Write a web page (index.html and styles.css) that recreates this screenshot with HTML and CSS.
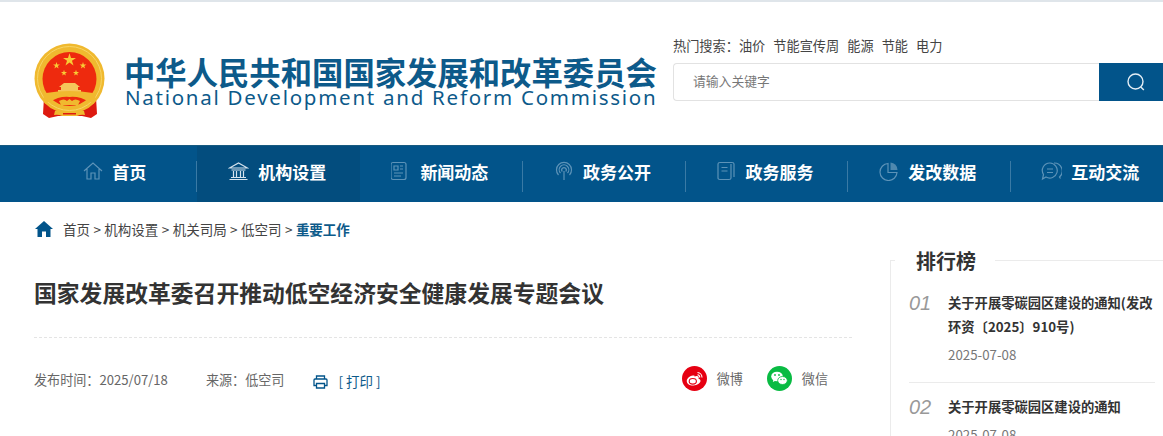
FILE: index.html
```html
<!DOCTYPE html>
<html lang="zh-CN">
<head>
<meta charset="utf-8">
<title>国家发展改革委召开推动低空经济安全健康发展专题会议</title>
<link rel="stylesheet" href="styles.css">
</head>
<body>
<header class="header">
  <div class="brand">
    <svg class="emblem" width="72" height="76" viewBox="0 0 72 76">
      <defs><path id="star" d="M0-1 .225-.309H.951L.363.118.588.809 0 .382-.588.809-.363.118-.951-.309H-.225Z"/></defs>
      <path d="M10 54 L9 71 L15 75 L24 73 L48 73 L57 75 L63 71 L62 54 Z" fill="#dd1a10"/>
      <circle cx="35.500" cy="35.500" r="35" fill="#f0b92f"/>
      <circle cx="35.500" cy="35.500" r="32" fill="none" stroke="#f7d566" stroke-width="1"/>
      <circle cx="35.500" cy="36" r="27" fill="#ee2a0e"/>
      <g fill="#f8cb35">
        <use href="#star" transform="translate(35.500 17) scale(6.800)"/>
        <use href="#star" transform="translate(22.500 22.500) scale(3.600)"/>
        <use href="#star" transform="translate(49 22.500) scale(3.600)"/>
        <use href="#star" transform="translate(30 30) scale(3.200)"/>
        <use href="#star" transform="translate(42 30) scale(3.200)"/>
      </g>
      <path d="M30 40 H41 L46 44 H44 V47 H47 V50 H24 V47 H27 V44 H25 Z" fill="#f5c65a"/>
      <path d="M12 50 Q35.500 46 59 50 L62 56 Q60 60 55 59 Q46 53 35.500 54 Q25 53 16 59 Q11 60 9 56 Z" fill="#f0b92f"/>
      <path d="M25 58 Q30 55 33 58 L35.500 56 L38 58 Q41 55 46 58 L44 62 H27 Z" fill="#f0b92f"/>
      <path d="M21 68 Q26 66 30 69 H41 Q45 66 50 68 L51 72 Q47 71 43 73 H28 Q24 71 20 72 Z" fill="#f0b92f"/>
      <rect x="29" y="70" width="13" height="1.500" fill="#dd1a10"/>
    </svg>
    <div class="brand-text">
      <div class="brand-cn">中华人民共和国国家发展和改革委员会</div>
      <div class="brand-en">National Development and Reform Commission</div>
    </div>
  </div>
  <div class="search">
    <div class="hot"><span>热门搜索：</span><a>油价</a><a>节能宣传周</a><a>能源</a><a>节能</a><a>电力</a></div>
    <div class="search-row">
      <div class="search-input">请输入关键字</div>
      <button class="search-btn" aria-label="搜索">
        <svg width="20" height="20" viewBox="0 0 20 20" fill="none" stroke="#e4eef5" stroke-width="1.400"><circle cx="9.500" cy="9.500" r="7.500"/><path d="M14.800 15l3 3"/></svg>
      </button>
    </div>
  </div>
</header>

<nav class="nav">
  <a class="nav-item">
    <svg class="nav-icon" width="20" height="20" viewBox="0 0 20 20"><path d="M1 10 L10 2 L19 10 M4 8 V18 H8 V12 H12 V18 H16 V8"/></svg>
    <span>首页</span>
  </a>
  <a class="nav-item active">
    <svg class="nav-icon bright" width="21" height="20" viewBox="0 0 20 20"><path d="M1 7 L10 2 L19 7 Z M3 9 H17 M5 10 V16 M8 10 V16 M12 10 V16 M15 10 V16 M2.500 16.500 H17.500 M1 18.500 H19"/></svg>
    <span>机构设置</span>
  </a>
  <a class="nav-item">
    <svg class="nav-icon" width="20" height="20" viewBox="0 0 20 20"><rect x="0" y="1.500" width="15" height="17" rx="2"/><path d="M3 5 H7 V9 H3 Z M9 5 H12 M9 8 H12 M3 12 H12 M3 15 H10"/></svg>
    <span>新闻动态</span>
  </a>
  <a class="nav-item">
    <svg class="nav-icon" width="20" height="20" viewBox="0 0 20 20"><path d="M10 19 V10 M4.500 14 A7.500 7.500 0 1 1 15.500 14 M6.500 12 A4.800 4.800 0 1 1 13.500 12 M8.300 10.500 A2.300 2.300 0 1 1 11.700 10.500"/></svg>
    <span>政务公开</span>
  </a>
  <a class="nav-item">
    <svg class="nav-icon" width="20" height="20" viewBox="0 0 20 20"><path d="M14 3 V17 Q14 18.500 12 18.500 H3 Q1 18.500 1 17 V3 Q1 1.500 3 1.500 H15 Q17 1.500 17 3 V16 M4.500 6.500 H10.500 M4.500 10 H10.500"/></svg>
    <span>政务服务</span>
  </a>
  <a class="nav-item">
    <svg class="nav-icon" width="20" height="20" viewBox="0 0 20 20"><path d="M9 2.500 A8.500 8.500 0 1 0 18 11.500 H9 Z"/><path class="fill" d="M11.500 1.500 A7.500 7.500 0 0 1 18.500 9 H11.500 Z"/></svg>
    <span>发改数据</span>
  </a>
  <a class="nav-item">
    <svg class="nav-icon" width="21" height="20" viewBox="0 0 21 20"><path d="M9 2 A7.500 7.500 0 1 1 5 16 L1.500 18 L2.500 13.500 A7.500 7.500 0 0 1 9 2 Z M6 8 H12 M6 11.500 H12 M13 2 A8 8 0 0 1 18.500 16 L19.500 17.500"/></svg>
    <span>互动交流</span>
  </a>
</nav>

<div class="crumbs">
  <svg class="crumb-home" width="18" height="16" viewBox="0 0 18 16"><path d="M9 0 L18 8 L15.500 8 V16 H11 V10.500 H7 V16 H2.500 V8 L0 8 Z" fill="#02548a"/></svg>
  <span>首页 &gt; 机构设置 &gt; 机关司局 &gt; 低空司 &gt; <b>重要工作</b></span>
</div>

<main class="main">
  <article class="article">
    <h1 class="title">国家发展改革委召开推动低空经济安全健康发展专题会议</h1>
    <div class="meta">
      <span class="meta-item">发布时间：2025/07/18</span>
      <span class="meta-item source">来源：低空司</span>
      <a class="print">
        <svg class="print-icon" width="15" height="14" viewBox="0 0 15 14" fill="none" stroke="#02548a" stroke-width="1.300"><path d="M3.500 4 V1 H11.500 V4 M3 10.500 H1 V5 Q1 4 2 4 H13 Q14 4 14 5 V10.500 H12"/><path d="M3.500 8.500 H11.500 V13 H3.500 Z" /></svg>
        <span>[ 打印 ]</span>
      </a>
      <div class="share">
        <span class="share-item">
          <svg width="25" height="25" viewBox="0 0 25 25"><circle cx="12.500" cy="12.500" r="12.500" fill="#e60012"/><path d="M11 9.500 C7 10 4.500 13 4.800 15.500 C5.200 18.500 8.500 19.800 11.500 19.500 C15 19.200 18.500 17.300 18.500 14.800 C18.500 13.500 17.200 13 16.500 12.800 C17.200 11 16.500 9.800 14.500 10 L12.500 10.600 C12.800 9.500 12.200 9.200 11 9.500 Z" fill="#fff"/><ellipse cx="10.800" cy="15.300" rx="3.600" ry="2.800" fill="none" stroke="#e60012" stroke-width="1.100"/><path d="M15.500 6.500 A5 5 0 0 1 20 11.500 M15.500 8.800 A2.700 2.700 0 0 1 17.800 11.500" fill="none" stroke="#fff" stroke-width="1.100"/></svg>
          <span>微博</span>
        </span>
        <span class="share-item">
          <svg width="25" height="25" viewBox="0 0 25 25"><circle cx="12.500" cy="12.500" r="12.500" fill="#09bb43"/><ellipse cx="10" cy="10.500" rx="5.800" ry="4.800" fill="#fff"/><path d="M6.500 13.500 L5.800 16 L8.500 14.800Z" fill="#fff"/><ellipse cx="15.500" cy="14.500" rx="4.800" ry="4" fill="#fff" stroke="#09bb43" stroke-width=".8"/><circle cx="8" cy="9" r=".9" fill="#09bb43"/><circle cx="12" cy="9" r=".9" fill="#09bb43"/><circle cx="14" cy="13.500" r=".7" fill="#09bb43"/><circle cx="17" cy="13.500" r=".7" fill="#09bb43"/></svg>
          <span>微信</span>
        </span>
      </div>
    </div>
  </article>
  <aside class="rank">
    <h2 class="rank-title">排行榜</h2>
    <ul class="rank-list">
      <li class="rank-item">
        <i class="rank-no">01</i>
        <div class="rank-body">
          <a class="rank-link">关于开展零碳园区建设的通知(发改环资〔2025〕910号)</a>
          <div class="rank-date">2025-07-08</div>
        </div>
      </li>
      <li class="rank-item">
        <i class="rank-no">02</i>
        <div class="rank-body">
          <a class="rank-link">关于开展零碳园区建设的通知</a>
          <div class="rank-date">2025-07-08</div>
        </div>
      </li>
    </ul>
  </aside>
</main>
</body>
</html>
```
FILE: styles.css
```css
* { box-sizing: border-box; }
html, body { margin: 0; padding: 0; height: 436px; overflow: hidden; background: #fff; }
body { font-family: "Noto Sans CJK SC", "Liberation Sans", sans-serif; color: #333; font-size: 13px; }
a { color: inherit; text-decoration: none; }

.header { height: 145px; border-top: 2px solid #dfe5ea; display: flex; justify-content: space-between; }
.brand { display: flex; margin-left: 34px; margin-top: 41px; align-items: flex-start; }
.emblem { flex: none; }
.brand-text { margin-left: 18px; margin-top: 14px; color: #0d5a8a; }
.brand-cn { font-size: 31.350px; line-height: 30px; font-weight: 700; white-space: nowrap; }
.brand-en { font-family: "Noto Sans", "Liberation Sans", sans-serif; font-size: 20.500px; line-height: 20px; letter-spacing: 1.740px; white-space: nowrap; margin-left: 1px; }

.search { width: 490px; margin-top: 35px; }
.hot { font-size: 13.200px; line-height: 18px; color: #444; white-space: nowrap; }
.hot a { margin-right: 8px; }
.search-row { display: flex; height: 38px; margin-top: 8px; }
.search-input { flex: 1; border: 1px solid #e2e2e2; border-right: 0; border-radius: 4px 0 0 4px; padding-left: 19px; line-height: 33px; color: #777; font-size: 12.800px; }
.search-btn { width: 64px; border: 0; background: #02548a; padding: 0 0 0 10px; display: flex; align-items: center; justify-content: center; }

.nav { display: flex; height: 57px; background: #02548a; padding-left: 34.400px; border-top: 1px solid #175a80; width: 1163px; overflow: hidden; }
.nav-item { flex: 0 0 162.600px; display: flex; align-items: center; justify-content: center; gap: 9px; color: #fff; font-size: 17px; font-weight: 700; position: relative; padding: 0 2px 6px 0; }
.nav-item + .nav-item::before { content: ""; position: absolute; left: 0; top: 15px; height: 31px; width: 1px; background: #3a7aa5; }
.nav-item.active { background: #034d7e; }
.nav-item.active::before { left: -1px; }
.active + .nav-item::before { background: transparent; }
.nav-icon { fill: none; stroke: #5d93b8; stroke-width: 1.200; flex: none; }
.nav-icon.bright { stroke: #d5e3ee; }
.nav-icon .fill { fill: #4f88ae; stroke: none; }

.crumbs { display: flex; align-items: center; margin: 18px 0 0 35px; height: 18px; font-size: 13.500px; color: #444; word-spacing: 0.400px; }
.crumb-home { margin-right: 10px; }
.crumbs b { color: #0d5a8a; font-weight: 700; }

.main { display: flex; align-items: flex-start; padding-left: 34px; margin-top: 20px; width: 1163px; }
.article { width: 818px; flex: none; }
.title { margin: 0; padding: 17px 0 26px; font-size: 22.800px; line-height: 36px; font-weight: 700; color: #333; border-bottom: 1px dashed #e4e4e4; white-space: nowrap; }
.meta { display: flex; align-items: center; height: 25px; margin-top: 29px; font-size: 13.100px; color: #666; }
.source { margin-left: 38px; }
.print { margin-left: 29px; display: flex; align-items: center; gap: 10px; color: #0d5a8a; font-size: 13.500px; padding-top: 2px; }
.print-icon { margin-top: 3px; }
.share { margin-left: auto; margin-right: 24px; margin-top: -3px; display: flex; gap: 24px; }
.share-item { display: flex; align-items: center; gap: 10px; }

.rank { margin-left: 38px; width: 300px; flex: none; margin-top: 2px; height: 300px; border: 1px solid #ebebeb; padding: 0 0 0 18px; }
.rank-title { margin: -14px 0 0 6px; padding: 0 19px 0 1px; background: #fff; width: max-content; font-size: 20px; line-height: 28px; font-weight: 700; color: #333; box-shadow: -20px 0 0 #fff; }
.rank-list { list-style: none; margin: 16px 0 0; padding: 0; width: 246px; }
.rank-item { display: flex; padding-bottom: 17px; border-bottom: 1px solid #ebebeb; margin-bottom: 12px; }
.rank-no { width: 39px; flex: none; font-family: "Liberation Sans", sans-serif; font-size: 20px; line-height: 24px; color: #999; font-style: italic; }
.rank-body { flex: 1; }
.rank-link { display: block; font-size: 13.300px; line-height: 24px; color: #333; font-weight: 700; }
.rank-date { margin-top: 6px; font-size: 13.300px; line-height: 20px; color: #777; }
```
